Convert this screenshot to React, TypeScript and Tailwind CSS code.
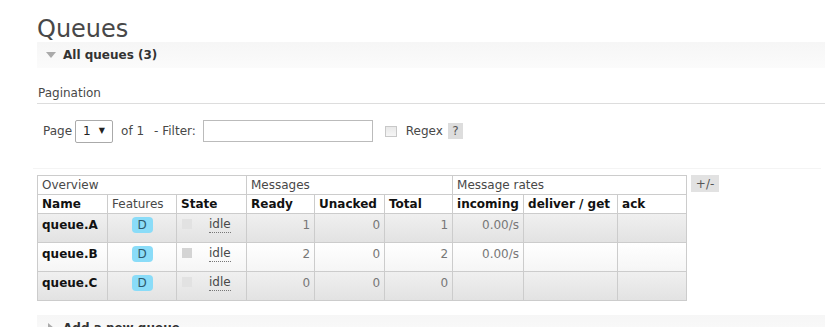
import React from 'react'

interface QueueRow {
  name: string
  ready: number
  unacked: number
  total: number
  incoming?: string
}

const queues: QueueRow[] = [
  { name: 'queue.A', ready: 1, unacked: 0, total: 1, incoming: '0.00/s' },
  { name: 'queue.B', ready: 2, unacked: 0, total: 2, incoming: '0.00/s' },
  { name: 'queue.C', ready: 0, unacked: 0, total: 0 },
]

function SectionHeader({ title, open }: { title: string; open: boolean }) {
  return (
    <div className="flex items-center h-[26px] bg-linear-to-b from-[#f6f6f6] to-[#fbfbfb]">
      <div className="w-[26px] flex justify-center pl-[2px]">
        {open ? (
          <div className="w-0 h-0 border-l-[5px] border-r-[5px] border-t-[6px] border-l-transparent border-r-transparent border-t-[#aaa]" />
        ) : (
          <div className="w-0 h-0 border-t-[5px] border-b-[5px] border-l-[6px] border-t-transparent border-b-transparent border-l-[#aaa]" />
        )}
      </div>
      <span className="font-bold text-[12px] text-[#333]">{title}</span>
    </div>
  )
}

export default function App() {
  const th = 'border border-[#ccc] px-[4px] h-[19px] leading-[16px] text-left'
  const td = 'border border-[#ccc] px-[4px] h-[29px] align-top pt-[3px] leading-[16px]'

  return (
    <div className="w-[825px] h-[327px] overflow-hidden bg-white font-['DejaVu_Sans',Verdana,sans-serif] text-[12px] text-[#484848]">
      <div className="pl-[37px]">
        {/* Title */}
        <h1 className="pt-[16px] text-[24px] leading-[26px] text-[#484848]">Queues</h1>

        <SectionHeader title="All queues (3)" open />

        {/* Pagination */}
        <div className="mt-[17px] border-b border-[#ddd] pb-[2px] leading-[16px] pl-[1px]">Pagination</div>

        <div className="flex items-center mt-[15px] pl-[6px] h-[24px]">
          <span>Page</span>
          <div className="ml-[3px] w-[38px] h-[23px] border border-[#aaa] rounded-[2px] flex items-center pl-[7px] text-[#222]">
            <span>1</span>
            <span className="ml-[8px] text-[8px]">▼</span>
          </div>
          <span className="ml-[8px]">of 1</span>
          <span className="ml-[10px]">- Filter:</span>
          <input className="ml-[7px] w-[170px] h-[22px] border border-[#bbb] outline-none" />
          <div className="ml-[12px] w-[12px] h-[11px] border border-[#c8c8c8] bg-linear-to-b from-[#e8e8e8] to-[#f6f6f6]" />
          <span className="ml-[9px]">Regex</span>
          <span className="ml-[5px] w-[15px] h-[16px] bg-[#ddd] flex items-center justify-center text-[#555]">?</span>
        </div>

        <div className="mt-[25px] h-px w-full bg-[#f4f4f4] -ml-[4px]" />

        {/* Queue table */}
        <div className="flex items-start mt-[6px]">
          <table className="border-collapse table-fixed w-[649px]">
            <colgroup>
              <col className="w-[70px]" />
              <col className="w-[69px]" />
              <col className="w-[70px]" />
              <col className="w-[68px]" />
              <col className="w-[70px]" />
              <col className="w-[68px]" />
              <col className="w-[71px]" />
              <col className="w-[94px]" />
              <col className="w-[69px]" />
            </colgroup>
            <thead>
              <tr>
                <th colSpan={3} className={`${th} font-normal`}>Overview</th>
                <th colSpan={3} className={`${th} font-normal`}>Messages</th>
                <th colSpan={3} className={`${th} font-normal`}>Message rates</th>
              </tr>
              <tr className="text-[#111]">
                <th className={th}>Name</th>
                <th className={`${th} font-normal text-[#484848]`}>Features</th>
                <th className={th}>State</th>
                <th className={th}>Ready</th>
                <th className={th}>Unacked</th>
                <th className={th}>Total</th>
                <th className={th}>incoming</th>
                <th className={th}>deliver / get</th>
                <th className={th}>ack</th>
              </tr>
            </thead>
            <tbody>
              {queues.map((q, i) => (
                <tr
                  key={q.name}
                  className={
                    i % 2 === 0
                      ? 'bg-linear-to-b from-[#f0f0f0] to-[#e2e2e2]'
                      : 'bg-linear-to-b from-white to-[#f5f5f5]'
                  }
                >
                  <td className={`${td} font-bold text-[#111]`}>{q.name}</td>
                  <td className={`${td} pt-[2px]`}>
                    <div className="mx-auto w-[21px] h-[16px] rounded-[4px] bg-[#8adcf8] flex items-center justify-center text-[#2d5a6e] leading-none">
                      D
                    </div>
                  </td>
                  <td className={td}>
                    <div className="flex items-start">
                      <div className={`mt-[2px] ml-[1px] w-[10px] h-[10px] ${i === 1 ? 'bg-[#d4d4d4]' : 'bg-[#e2e2e2]'}`} />
                      <span className="ml-[17px] border-b border-dotted border-[#777] leading-[15px]">idle</span>
                    </div>
                  </td>
                  <td className={`${td} text-right text-[#777]`}>{q.ready}</td>
                  <td className={`${td} text-right text-[#777]`}>{q.unacked}</td>
                  <td className={`${td} text-right text-[#777]`}>{q.total}</td>
                  <td className={`${td} text-right text-[#777]`}>{q.incoming ?? ''}</td>
                  <td className={td}></td>
                  <td className={td}></td>
                </tr>
              ))}
            </tbody>
          </table>
          <div className="ml-[4px] w-[28px] h-[17px] bg-[#e2e2e2] flex items-center justify-center text-[#555] leading-none">
            +/-
          </div>
        </div>

        <div className="mt-[14px]">
          <SectionHeader title="Add a new queue" open={false} />
        </div>
      </div>
    </div>
  )
}
